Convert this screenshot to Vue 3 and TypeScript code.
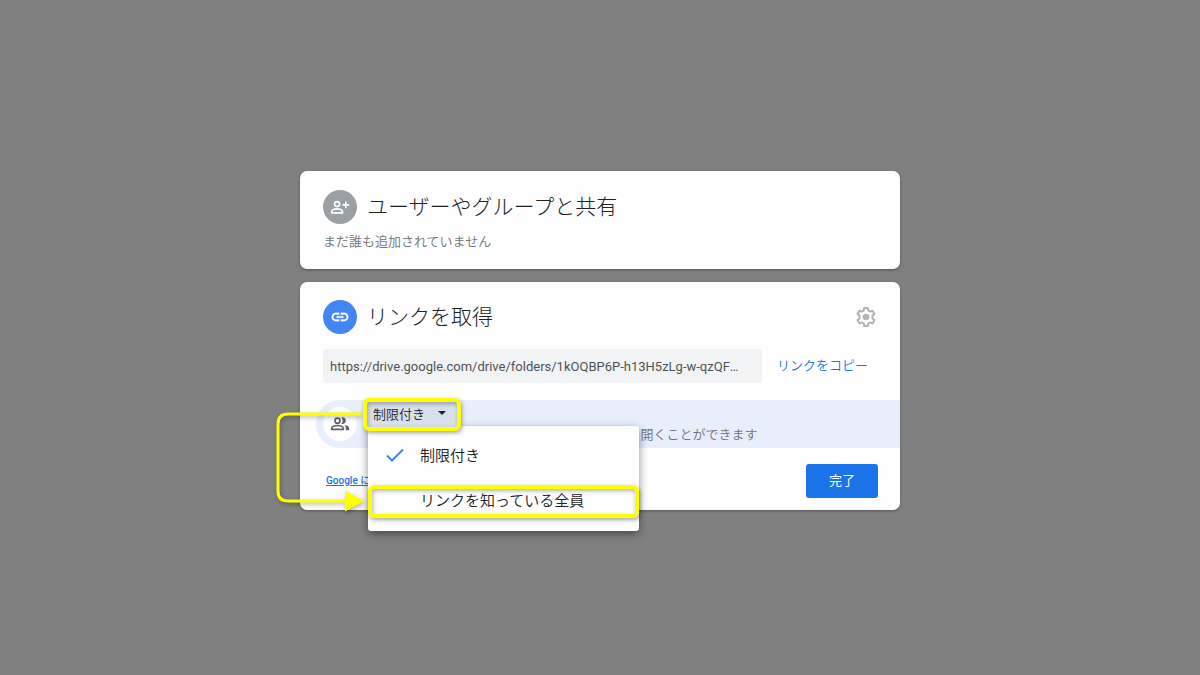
<script setup lang="ts">
import { ref } from 'vue'

const url = ref('https://drive.google.com/drive/folders/1kOQBP6P-h13H5zLg-w-qzQFmT4vYx2')
const options: string[] = ['制限付き', 'リンクを知っている全員']
const selected = ref(0)
</script>

<template>
  <main class="backdrop">
    <div class="dialog">
      <section class="card people">
        <header class="head">
          <span class="badge grey">
            <svg viewBox="0 0 24 24" width="20" height="20" fill="none" stroke="currentColor" stroke-width="2">
              <circle cx="8.500" cy="8.500" r="3" />
              <path d="M2 19v-1.500c0-2 3.500-3.200 6.500-3.200s6.500 1.200 6.500 3.200V19z" />
              <path d="M19 5.500v8M15 9.500h8" />
            </svg>
          </span>
          <h1>ユーザーやグループと共有</h1>
        </header>
        <p class="note">まだ誰も追加されていません</p>
      </section>

      <section class="card link">
        <header class="head">
          <span class="badge blue">
            <svg viewBox="0 0 24 24" width="20" height="20" fill="currentColor">
              <path d="M3.900 12c0-1.710 1.390-3.100 3.100-3.100h4V7H7c-2.760 0-5 2.240-5 5s2.240 5 5 5h4v-1.900H7c-1.710 0-3.100-1.390-3.100-3.100zM8 13h8v-2H8v2zm9-6h-4v1.900h4c1.710 0 3.100 1.390 3.100 3.100s-1.390 3.100-3.100 3.100h-4V17h4c2.760 0 5-2.240 5-5s-2.240-5-5-5z" stroke="currentColor" stroke-width="0.400" />
            </svg>
          </span>
          <h2>リンクを取得</h2>
          <button class="gear" type="button" aria-label="設定">
            <svg viewBox="0 0 24 24" width="24" height="24">
              <path
                d="M10.200 3h3.600l.5 2.500 1.900 1.100 2.400-.8 1.800 3.100-1.900 1.700v2.800l1.900 1.700-1.800 3.100-2.400-.8-1.900 1.100-.5 2.500h-3.600l-.5-2.500-1.900-1.100-2.400.8-1.800-3.100 1.900-1.700v-2.800L3.600 8.900l1.800-3.100 2.400.8 1.900-1.100z"
                fill="none" stroke="currentColor" stroke-width="2" stroke-linejoin="round"
              />
              <circle cx="12" cy="12" r="3.300" fill="currentColor" />
            </svg>
          </button>
        </header>

        <div class="url-row">
          <input v-model="url" class="url" type="text" readonly aria-label="共有リンク" />
          <button class="copy" type="button">リンクをコピー</button>
        </div>

        <div class="access">
          <span class="avatar">
            <svg viewBox="0 0 24 24" width="20" height="20">
              <g fill="none" stroke="currentColor" stroke-width="2">
                <circle cx="9" cy="8" r="3" />
                <path d="M2 18.500v-1.500c0-2 4-3.200 7-3.200s7 1.200 7 3.200v1.500z" />
              </g>
              <path
                d="M15 4c2.200 0 4 1.800 4 4s-1.800 4-4 4c-.5 0-1-.1-1.400-.3 1-1 1.500-2.300 1.500-3.700s-.6-2.700-1.500-3.700C14 4.100 14.500 4 15 4zM17.500 13.200c2.700.5 5.500 1.700 5.500 3.800v2.500h-4V17c0-1.500-.6-2.800-1.500-3.800z"
                fill="currentColor"
              />
            </svg>
          </span>
          <div class="detail">
            <button class="picker" type="button" aria-haspopup="listbox" aria-expanded="true">
              {{ options[selected] }}<span class="caret"></span>
            </button>
            <p class="explain">追加されたユーザーのみが、このリンクから開くことができます</p>
          </div>

          <div class="menu" role="listbox" aria-label="アクセス権">
            <button
              v-for="(option, i) in options"
              :key="option"
              class="option"
              :class="{ marked: i === 1 }"
              type="button"
              role="option"
              :aria-selected="i === selected"
              @click="selected = i"
            >
              <span class="tick">
                <svg v-if="i === selected" viewBox="0 0 18 14" width="18" height="14">
                  <path d="M1 7.500l5 5L17 1.500" fill="none" stroke="currentColor" stroke-width="2" />
                </svg>
              </span>
              {{ option }}
            </button>
          </div>

          <svg class="connector" viewBox="0 0 92 120" width="92" height="120" aria-hidden="true">
            <path d="M88 17H15Q5 17 5 27V94Q5 104 15 104H72" fill="none" stroke="#ffff00" stroke-width="3" />
            <path d="M72 93.500L91 104L72 114.500z" fill="#ffff00" />
          </svg>
        </div>

        <footer class="foot">
          <a class="feedback" href="#">Google にフィードバックを送信</a>
          <button class="done" type="button">完了</button>
        </footer>
      </section>
    </div>
  </main>
</template>

<style>
body {
  margin: 0;
  background: #808080;
}
</style>

<style scoped>
* {
  box-sizing: border-box;
}
.backdrop {
  min-height: 100vh;
  padding: 171px 24px 24px;
  background: #808080;
  font-family: Roboto, "Noto Sans CJK JP", sans-serif;
  font-size: 13px;
  font-weight: 350;
  color: #202124;
}
button,
input {
  border: 0;
  margin: 0;
  padding: 0;
  background: none;
  font: inherit;
  color: inherit;
}
.dialog {
  display: flex;
  flex-direction: column;
  gap: 13px;
  max-width: 600px;
  margin: 0 auto;
}
.card {
  background: #fefefe;
  border-radius: 7px;
  box-shadow: 0 1px 3px rgba(0, 0, 0, 0.35);
}
.people {
  padding: 19px 23px 17px;
}
.link {
  padding-top: 18px;
}
.head {
  display: flex;
  align-items: center;
  gap: 10px;
  height: 34px;
}
.link .head {
  padding: 0 22px 0 23px;
}
.badge {
  display: flex;
  align-items: center;
  justify-content: center;
  width: 34px;
  height: 34px;
  border-radius: 50%;
  color: #fefefe;
}
.grey {
  background: #9aa0a4;
}
.blue {
  background: #4286f3;
}
h1,
h2 {
  margin: 0;
  padding-bottom: 1px;
  font-size: 21px;
  line-height: 30px;
  font-weight: 300;
}
.note {
  margin: 8px 0 0;
  line-height: 20px;
  color: #6f7377;
}
.gear {
  display: flex;
  margin-left: auto;
  color: #b1b3b5;
}
.url-row {
  display: flex;
  align-items: center;
  gap: 15px;
  margin: 15px 32px 0 23px;
}
.url {
  flex: 1;
  min-width: 0;
  height: 34px;
  padding: 0 16px 0 7px;
  border-radius: 3px;
  background: #f1f3f4;
  color: #4f5357;
  font-size: 13px;
  font-weight: 400;
  text-overflow: ellipsis;
}
.copy {
  padding-bottom: 4px;
  color: #1a73e8;
}
.access {
  position: relative;
  display: flex;
  align-items: center;
  height: 48px;
  margin: 17px 0 0 16px;
  padding-left: 7px;
  border-radius: 24px 0 0 24px;
  background: #e8eefc;
}
.avatar {
  display: flex;
  align-items: center;
  justify-content: center;
  width: 34px;
  height: 34px;
  border-radius: 50%;
  background: #fefefe;
  color: #5f6368;
}
.detail {
  display: flex;
  flex-direction: column;
  align-items: flex-start;
  align-self: flex-start;
  margin: -2px 0 0 6px;
}
.picker {
  position: relative;
  z-index: 2;
  display: flex;
  align-items: center;
  gap: 13px;
  height: 33px;
  padding: 0 11px 3px 6px;
  border: 4px solid #ffff00;
  border-radius: 6px;
  background: #d8dfed;
  box-shadow: 1px 2px 4px rgba(0, 0, 0, 0.35), inset 1px 2px 4px rgba(0, 0, 0, 0.3);
}
.caret {
  border: 4px solid transparent;
  border-top-color: #202124;
  border-bottom: 0;
}
.explain {
  margin: -6px 0 0 18px;
  line-height: 20px;
  color: #6f7377;
}
.menu {
  position: absolute;
  z-index: 1;
  top: 26px;
  left: 52px;
  width: 271px;
  padding: 14px 0 13px;
  border-radius: 3px;
  background: #fefefe;
  box-shadow: 0 3px 8px rgba(0, 0, 0, 0.45);
}
.option {
  display: flex;
  align-items: center;
  width: 100%;
  height: 33px;
  padding: 0 0 4px 18px;
  font-size: 15px;
}
.option + .option {
  margin-top: 12px;
}
.marked {
  padding-left: 14px;
  border: 4px solid #ffff00;
  border-radius: 6px;
  box-shadow: 1px 2px 4px rgba(0, 0, 0, 0.35), inset 1px 2px 4px rgba(0, 0, 0, 0.3);
}
.tick {
  display: flex;
  width: 34px;
  color: #4286f3;
}
.connector {
  position: absolute;
  z-index: 1;
  top: -3px;
  left: -43px;
  filter: drop-shadow(1px 2px 2px rgba(0, 0, 0, 0.3));
}
.foot {
  display: flex;
  align-items: center;
  justify-content: space-between;
  padding: 16px 22px 12px 26px;
}
.feedback {
  padding-bottom: 4px;
  font-size: 10px;
  font-weight: 500;
  color: #1a73e8;
}
.done {
  width: 72px;
  height: 34px;
  padding-bottom: 4px;
  border-radius: 3px;
  background: #1a73e8;
  color: #fefefe;
  font-weight: 400;
}
</style>
